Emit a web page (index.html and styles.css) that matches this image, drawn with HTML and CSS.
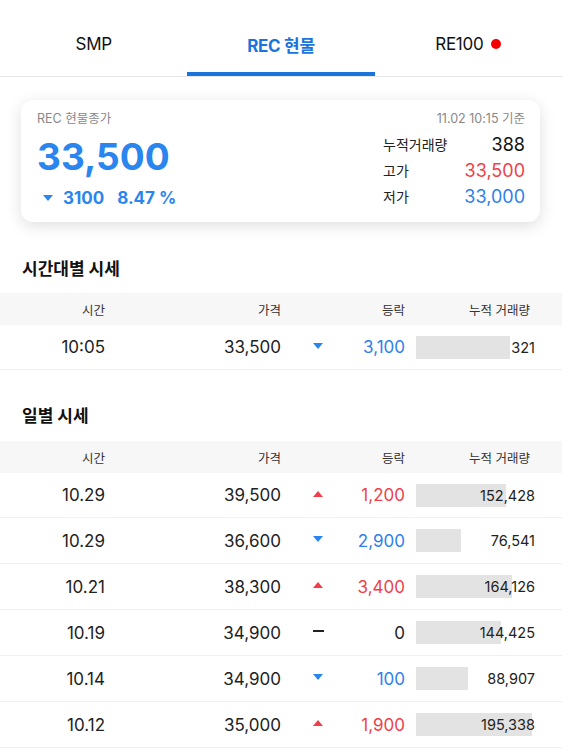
FILE: index.html
```html
<!DOCTYPE html>
<html lang="ko">
<head>
<meta charset="utf-8">
<link rel="stylesheet" href="styles.css">
</head>
<body>
<div class="page">
  <nav class="tabs">
    <div class="tab">SMP</div>
    <div class="tab active">REC 현물</div>
    <div class="tab">RE100 <span class="dot"></span></div>
  </nav>

  <section class="card">
    <div class="card-left">
      <div class="card-label">REC 현물종가</div>
      <div class="big">33,500</div>
      <div class="change"><span class="tri down big-tri"></span><span>3100</span><span>8.47 %</span></div>
    </div>
    <div class="card-right">
      <div class="asof">11.02 10:15 기준</div>
      <div class="stat"><span class="stat-label">누적거래량</span><span class="stat-val">388</span></div>
      <div class="stat"><span class="stat-label">고가</span><span class="stat-val red">33,500</span></div>
      <div class="stat"><span class="stat-label">저가</span><span class="stat-val blue">33,000</span></div>
    </div>
  </section>

  <h2 class="sec-title first">시간대별 시세</h2>
  <div class="table">
    <div class="row head"><span>시간</span><span>가격</span><span></span><span>등락</span><span class="vol-h">누적 거래량</span></div>
    <div class="row">
      <span>10:05</span><span>33,500</span><span class="arrow"><i class="tri down"></i></span><span class="blue">3,100</span>
      <span class="vol"><b class="bar" style="width:94px"></b><em>321</em></span>
    </div>
  </div>

  <h2 class="sec-title">일별 시세</h2>
  <div class="table">
    <div class="row head"><span>시간</span><span>가격</span><span></span><span>등락</span><span class="vol-h">누적 거래량</span></div>
    <div class="row">
      <span>10.29</span><span>39,500</span><span class="arrow"><i class="tri up"></i></span><span class="red">1,200</span>
      <span class="vol"><b class="bar" style="width:90px"></b><em>152,428</em></span>
    </div>
    <div class="row">
      <span>10.29</span><span>36,600</span><span class="arrow"><i class="tri down"></i></span><span class="blue">2,900</span>
      <span class="vol"><b class="bar" style="width:45px"></b><em>76,541</em></span>
    </div>
    <div class="row">
      <span>10.21</span><span>38,300</span><span class="arrow"><i class="tri up"></i></span><span class="red">3,400</span>
      <span class="vol"><b class="bar" style="width:96px"></b><em>164,126</em></span>
    </div>
    <div class="row">
      <span>10.19</span><span>34,900</span><span class="arrow"><i class="dash"></i></span><span>0</span>
      <span class="vol"><b class="bar" style="width:85px"></b><em>144,425</em></span>
    </div>
    <div class="row">
      <span>10.14</span><span>34,900</span><span class="arrow"><i class="tri down"></i></span><span class="blue">100</span>
      <span class="vol"><b class="bar" style="width:52px"></b><em>88,907</em></span>
    </div>
    <div class="row">
      <span>10.12</span><span>35,000</span><span class="arrow"><i class="tri up"></i></span><span class="red">1,900</span>
      <span class="vol"><b class="bar" style="width:116px"></b><em>195,338</em></span>
    </div>
  </div>
</div>
</body>
</html>
```

FILE: styles.css
```css
* { box-sizing: border-box; }
html, body { margin: 0; padding: 0; background: #fff; }
body {
  font-family: Inter, "Noto Sans CJK KR", "Noto Sans", sans-serif;
  color: #222;
}
.page { width: 562px; }

.tabs {
  display: grid;
  grid-template-columns: repeat(3, 1fr);
  border-bottom: 1px solid #e6e6e6;
  height: 77px;
}
.tab {
  display: flex;
  align-items: center;
  justify-content: center;
  gap: 8px;
  font-size: 17px;
  color: #111;
  padding-top: 16px;
  border-bottom: 4px solid transparent;
  letter-spacing: -0.3px;
}
.tab.active {
  color: #1b74dc;
  font-weight: 700;
  border-bottom-color: #1b74dc;
}
.dot {
  width: 10px; height: 10px; border-radius: 50%;
  background: #f40000;
  display: inline-block;
}

.card {
  margin: 23px 22px 0 21px;
  height: 122px;
  border-radius: 12px;
  background: #fff;
  box-shadow: 0 4px 16px rgba(0,0,0,0.13);
  display: flex;
  justify-content: space-between;
  padding: 11px 15px 0 16px;
}
.card-label { font-size: 12.5px; color: #888; line-height: 16px; }
.big {
  font-size: 37px; font-weight: 700; color: #2a85ee;
  line-height: 44px; margin-top: 8px;
}
.change {
  display: flex; align-items: center; gap: 10px;
  font-size: 17px; font-weight: 700; color: #2a85ee;
  margin-top: 9px; padding-left: 6px;
}
.change span:last-child { margin-left: 3px; }

.card-right { width: 142px; display: flex; flex-direction: column; }
.asof {
  text-align: right; font-size: 12.5px; color: #888; line-height: 16px;
  margin-bottom: 4px;
}
.stat {
  display: flex; justify-content: space-between; align-items: center;
  height: 26px;
}
.stat-label { font-size: 14px; color: #222; }
.stat-val { font-size: 18px; color: #111; }

.red { color: #ef3f4b; }
.blue { color: #2f80ec; }

.tri {
  display: inline-block; width: 0; height: 0;
  border-left: 5px solid transparent;
  border-right: 5px solid transparent;
}
.tri.down { border-top: 6px solid #2a85ee; }
.tri.up { border-bottom: 6px solid #ef3f4b; }
.dash { display: inline-block; width: 11px; height: 2px; background: #222; }

.sec-title {
  margin: 35px 0 12px 22px;
  font-size: 17px; font-weight: 700; line-height: 24px; color: #111;
}
.sec-title:not(.first) { margin-top: 34px; margin-bottom: 13px; }

.row {
  display: grid;
  grid-template-columns: 105px 176px 74px 50px 11px 124px;
  align-items: center;
  height: 46px;
  border-bottom: 1px solid #f1f1f1;
  font-size: 17px;
}
.row > span { text-align: right; }
.row > span:nth-child(1) { grid-column: 1; }
.row > span:nth-child(2) { grid-column: 2; }
.row > span:nth-child(3) { grid-column: 3; }
.row > span:nth-child(4) { grid-column: 4; }
.row > span:nth-child(5) { grid-column: 6; }
.row.head {
  height: 32px; background: #f7f7f7; border-bottom: none;
  font-size: 12.5px; color: #333;
}
.vol-h { padding-right: 10px; }
.table .row:nth-child(2) { height: 45px; }
.arrow { display: flex; justify-content: center; align-items: center; padding-bottom: 3px; }
.vol { display: grid; align-items: center; }
.vol > * { grid-area: 1 / 1; }
.bar { display: block; height: 23px; background: #e3e3e3; }
.vol em {
  font-style: normal; font-size: 14.5px; color: #222;
  text-align: right; padding-right: 5px; position: relative;
}
```
